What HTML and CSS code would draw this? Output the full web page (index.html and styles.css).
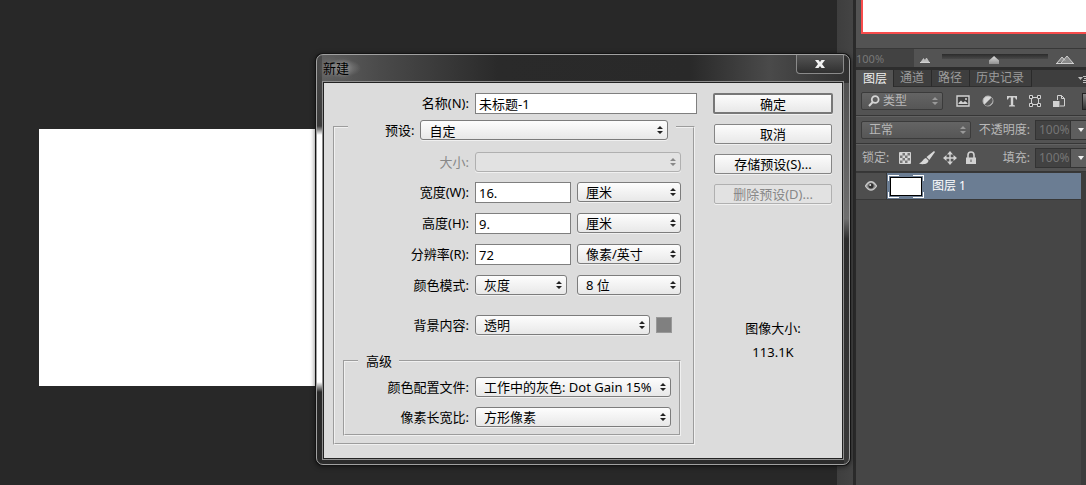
FILE: index.html
```html
<!DOCTYPE html>
<html lang="zh-CN">
<head>
<meta charset="utf-8">
<title>新建</title>
<link rel="stylesheet" href="styles.css">
</head>
<body>
<div class="app">
  <main class="workspace"><div class="canvas"></div></main>
  <div class="dock-strip"></div>
  <aside class="panels">
    <section class="navigator">
      <div class="navigator-view"><div class="navigator-proxy"></div></div>
      <div class="navigator-bar">
        <input class="zoom-value" type="text" value="100%" aria-label="缩放">
        <svg class="mountain-small" viewBox="0 0 10 6" width="10" height="6"><path d="M0 5.500h10" stroke="#d0d0d0"/><path d="M1 5l2.500-3.500L5 3.500 6.500 1 9 5z" fill="#bbb" stroke="#d0d0d0" stroke-width=".6"/></svg>
        <input class="zoom-slider" type="range" min="0" max="100" value="49" aria-label="缩放滑块">
        <svg class="mountain-large" viewBox="0 0 18 9" width="18" height="9"><path d="M1 8L6 2l3 3.500M5 8l6-7 6 7" fill="#8a8a8a" stroke="#d0d0d0"/><path d="M0 8.500h18" stroke="#d0d0d0"/></svg>
      </div>
    </section>
    <section class="layers">
      <nav class="tabs">
        <button class="tab tab-active" type="button">图层</button>
        <button class="tab" type="button">通道</button>
        <button class="tab" type="button">路径</button>
        <button class="tab" type="button">历史记录</button>
        <button class="panel-menu" type="button" aria-label="面板菜单"><svg viewBox="0 0 8 8" width="8" height="8"><path d="M0 2h5L2.500 5z" fill="#c0c0c0"/><path d="M5 1.500h3M6 3.500h2M5 5.500h3M5 7.500h3" stroke="#c0c0c0"/></svg></button>
      </nav>
      <div class="tool-row filter-row">
        <div class="filter-kind">
          <svg class="search-icon" viewBox="0 0 12 12" width="12" height="12"><circle cx="7.200" cy="4.500" r="3.400" fill="none" stroke="#d4d4d4" stroke-width="1.800"/><path d="M4.800 7L1 11" stroke="#d4d4d4" stroke-width="2"/></svg>
          <select class="dark-select" aria-label="过滤类型"><option>类型</option></select>
        </div>
        <div class="filter-icons">
          <button class="icon-button" type="button" aria-label="像素图层"><svg viewBox="0 0 14 12" width="14" height="12"><path d="M1 1h12v10H1z" fill="#404040" stroke="#d2d2d2" stroke-width="1.400"/><path d="M2.500 9V8L5 5.500l2 2L9 6l2.500 2v1z" fill="#d2d2d2"/><circle cx="10" cy="4" r="1" fill="#d2d2d2"/></svg></button>
          <button class="icon-button" type="button" aria-label="调整图层"><svg viewBox="0 0 12 12" width="12" height="12"><circle cx="6" cy="6" r="5" fill="#d8d8d8" stroke="#b4b4b4"/><path d="M2.500 9.500A5 5 0 0 0 9.500 2.500z" fill="#5b5b5b"/></svg></button>
          <button class="icon-button" type="button" aria-label="文字图层"><svg viewBox="0 0 12 12" width="12" height="12"><path d="M1 1h10v3.500h-1L9 2.500H7.200v7.500l1.800.5V11.500H3v-1l1.800-.5V2.500H3L2 4.500H1z" fill="#d2d2d2"/></svg></button>
          <button class="icon-button" type="button" aria-label="形状图层"><svg viewBox="0 0 12 12" width="12" height="12"><path d="M2.500 2.500h7v7h-7z" fill="none" stroke="#d2d2d2"/><path d="M.5.5h3v3h-3zM8.500.5h3v3h-3zM.5 8.500h3v3h-3zM8.500 8.500h3v3h-3z" fill="#404040" stroke="#d2d2d2"/></svg></button>
          <button class="icon-button" type="button" aria-label="智能对象"><svg viewBox="0 0 12 12" width="12" height="12"><path d="M4.500 5V.5h4l3 3v7.500H7" fill="none" stroke="#d2d2d2"/><path d="M8.500.5v3h3" fill="none" stroke="#d2d2d2"/><path d="M0 6h6.500v6H0z" fill="#d2d2d2"/></svg></button>
        </div>
        <button class="filter-toggle" type="button" aria-label="过滤开关"></button>
      </div>
      <div class="tool-row">
        <select class="dark-select blend-select" aria-label="混合模式"><option>正常</option></select>
        <label class="value-label" for="opacity">不透明度:</label>
        <input class="value-input" id="opacity" type="text" value="100%">
        <button class="value-drop" type="button" aria-label="不透明度选项"></button>
      </div>
      <div class="tool-row">
        <span class="lock-label">锁定:</span>
        <div class="lock-icons">
          <button class="icon-button" type="button" aria-label="锁定透明像素"><svg viewBox="0 0 12 12" width="12" height="12"><path d="M.5.5h11v11H.5z" fill="#777" stroke="#d2d2d2"/><path d="M1 1h2.500v2.500H1zM6 1h2.500v2.500H6zM3.500 3.500H6V6H3.500zM8.500 3.500H11V6H8.500zM1 6h2.500v2.500H1zM6 6h2.500v2.500H6zM3.500 8.500H6V11H3.500zM8.500 8.500H11V11H8.500z" fill="#d8d8d8"/></svg></button>
          <button class="icon-button" type="button" aria-label="锁定图像像素"><svg viewBox="0 0 16 14" width="16" height="14"><path d="M15 0L7.500 6l2.800 3L16 1z" fill="#d8d8d8"/><path d="M7 7C4.500 7 4 11 0 12.500c4 1.500 9.500.5 9.500-3z" fill="#d8d8d8"/></svg></button>
          <button class="icon-button" type="button" aria-label="锁定位置"><svg viewBox="0 0 14 14" width="14" height="14"><path d="M7 2v10M2 7h10" stroke="#d2d2d2" stroke-width="1.400"/><path d="M7 0l3 3.500H4zM7 14l3-3.500H4zM0 7l3.500-3v6zM14 7l-3.500-3v6z" fill="#d2d2d2"/></svg></button>
          <button class="icon-button" type="button" aria-label="锁定全部"><svg viewBox="0 0 12 14" width="12" height="14"><path d="M3 7V4a3 3 0 0 1 6 0v3" fill="none" stroke="#d2d2d2" stroke-width="1.600"/><path d="M1 6.500h10V13H1z" fill="#d2d2d2"/><path d="M5.500 8.500h1V11h-1z" fill="#555"/></svg></button>
        </div>
        <label class="value-label" for="fill">填充:</label>
        <input class="value-input" id="fill" type="text" value="100%">
        <button class="value-drop" type="button" aria-label="填充选项"></button>
      </div>
      <div class="layer-area">
        <div class="layer">
          <button class="layer-eye" type="button" aria-label="可见性"><svg viewBox="0 0 12 10" width="12" height="10"><path d="M.5 5Q6-3.500 11.500 5 6 13 .5 5z" fill="#888" stroke="#c8c8c8" stroke-width="1.300"/><circle cx="6" cy="4.800" r="2.600" fill="#303030"/><circle cx="5.200" cy="4" r="1" fill="#ddd"/></svg></button>
          <div class="layer-main">
            <div class="layer-thumb"><div class="layer-image"></div></div>
            <span class="layer-name">图层 1</span>
          </div>
        </div>
      </div>
    </section>
  </aside>

  <form class="dialog" role="dialog" aria-labelledby="dialog-title">
    <header class="titlebar">
      <h1 class="dialog-title" id="dialog-title">新建</h1>
      <button class="close" type="button" aria-label="关闭"><svg viewBox="0 0 10 8" width="10" height="8"><path d="M0 0h3.500L5 2 6.500 0H10L7 4l3 4H6.500L5 6 3.500 8H0l3-4z" fill="#f4f4f4"/></svg></button>
    </header>
    <div class="dialog-body">
      <div class="settings">
        <div class="row name-row"><label class="row-label" for="name">名称(N):</label><input class="text-input" id="name" type="text" value="未标题-1"></div>
        <fieldset class="group">
          <legend class="preset-legend"><label for="preset">预设:</label><select class="select preset-select" id="preset"><option>自定</option></select></legend>
          <div class="rows">
            <div class="row"><label class="row-label disabled-label" for="size">大小:</label><select class="select" id="size" disabled><option></option></select></div>
            <div class="row"><label class="row-label" for="width">宽度(W):</label><input class="text-input" id="width" type="text" value="16."><select class="select unit-select" aria-label="宽度单位"><option>厘米</option></select></div>
            <div class="row"><label class="row-label" for="height">高度(H):</label><input class="text-input" id="height" type="text" value="9."><select class="select unit-select" aria-label="高度单位"><option>厘米</option></select></div>
            <div class="row"><label class="row-label" for="resolution">分辨率(R):</label><input class="text-input" id="resolution" type="text" value="72"><select class="select unit-select" aria-label="分辨率单位"><option>像素/英寸</option></select></div>
            <div class="row mode-row"><label class="row-label" for="mode">颜色模式:</label><select class="select" id="mode"><option>灰度</option></select><select class="select unit-select" aria-label="位深度"><option>8 位</option></select></div>
            <div class="row background-row"><label class="row-label" for="background">背景内容:</label><select class="select" id="background"><option>透明</option></select><button class="swatch" type="button" aria-label="背景颜色"></button></div>
          </div>
          <fieldset class="group advanced">
            <legend class="advanced-legend">高级</legend>
            <div class="row"><label class="row-label" for="profile">颜色配置文件:</label><select class="select" id="profile"><option>工作中的灰色: Dot Gain 15%</option></select></div>
            <div class="row"><label class="row-label" for="ratio">像素长宽比:</label><select class="select" id="ratio"><option>方形像素</option></select></div>
          </fieldset>
        </fieldset>
      </div>
      <div class="actions">
        <button class="button button-default" type="submit">确定</button>
        <button class="button" type="button">取消</button>
        <button class="button" type="button">存储预设(S)...</button>
        <button class="button" type="button" disabled>删除预设(D)...</button>
        <dl class="image-size"><dt>图像大小:</dt><dd>113.1K</dd></dl>
      </div>
    </div>
  </form>
</div>
</body>
</html>
```
FILE: styles.css
```css
*, *::before, *::after { box-sizing: border-box; }

body {
  margin: 0;
  background: #282828;
  color: #000;
  font: 13px/16px "Noto Sans", "Noto Sans CJK SC", sans-serif;
}

button, input, select {
  margin: 0;
  padding: 0;
  border: 0;
  font: inherit;
  color: inherit;
}

.app {
  position: relative;
  display: flex;
  min-height: 100vh;
  overflow: hidden;
}

.workspace {
  flex: 1;
  padding: 129px 0 99px 39px;
  background: #282828;
}

.canvas {
  max-width: 455px;
  height: 257px;
  background: #fff;
}

.dock-strip {
  width: 19px;
  background: linear-gradient(90deg, #3e3e3e, #444 16px, #2a2a2a 16px);
}

/* Docked panels */

.panels {
  display: flex;
  flex-direction: column;
  width: 230px;
  background: #535353;
  color: #b8b8b8;
}

.navigator { border-bottom: 3px solid #2d2d2d; }

.navigator-view {
  height: 49px;
  padding-left: 5px;
  border-bottom: 1px solid #383838;
}

.navigator-proxy {
  height: 34px;
  border: solid #f84c4c;
  border-width: 0 0 2px 2px;
  background: #fff;
}

.navigator-bar {
  display: flex;
  align-items: center;
  height: 18px;
}

.zoom-value {
  width: 58px;
  height: 18px;
  margin-right: 6px;
  background: #424242;
  color: #787878;
  font-size: 11px;
}

.zoom-slider {
  flex: 1;
  min-width: 0;
  height: 14px;
  margin: 0 8px 0 12px;
  appearance: none;
  background: linear-gradient(#2c2c2c, #484848) center 3px / 100% 5px no-repeat;
}

.zoom-slider::-webkit-slider-thumb {
  appearance: none;
  width: 10px;
  height: 8px;
  margin-top: 4px;
  background: linear-gradient(#ddd, #909090);
  clip-path: polygon(50% 0, 100% 55%, 100% 100%, 0 100%, 0 55%);
}

.mountain-small, .mountain-large { flex: none; margin-top: 3px; }
.mountain-large { margin-right: 12px; }

.layers {
  display: flex;
  flex: 1;
  flex-direction: column;
}

.tabs {
  display: flex;
  height: 17px;
  background: #3e3e3e;
}

.tab {
  padding: 0 7px 0 6px;
  border-right: 1px solid #2a2a2a;
  border-bottom: 1px solid #2f2f2f;
  background: #3e3e3e;
  color: #9c9c9c;
  font-size: 12px;
  line-height: 16px;
}

.tab-active {
  padding: 0 6px 0 7px;
  border-bottom: 0;
  background: #535353;
  color: #f0f0f0;
}

.panel-menu {
  display: flex;
  align-items: center;
  margin-left: auto;
  background: none;
}

.tool-row {
  display: flex;
  align-items: center;
  height: 28px;
  padding-left: 5px;
  border-bottom: 1px solid #363636;
  box-shadow: 0 1px #626262;
}

.filter-row { height: 29px; }

.dark-select {
  height: 18px;
  border: 1px solid #3b3b3b;
  border-radius: 2px;
  appearance: none;
  background:
    url("data:image/svg+xml,%3Csvg xmlns='http://www.w3.org/2000/svg' width='6' height='8'%3E%3Cpath d='M0 3l3-3 3 3zM0 5l3 3 3-3z' fill='%23999'/%3E%3C/svg%3E") right 4px center no-repeat,
    linear-gradient(#646464, #565656);
  font-size: 12px;
}

.filter-kind { position: relative; width: 82px; }
.filter-kind .dark-select { width: 100%; padding-left: 21px; }

.search-icon {
  position: absolute;
  top: 3px;
  left: 7px;
}

.filter-icons {
  display: flex;
  flex: 1;
  justify-content: space-between;
  margin: 0 17px 0 13px;
}

.icon-button {
  display: flex;
  align-items: center;
  background: none;
}

.filter-toggle {
  width: 4px;
  height: 17px;
  border: 1px solid #222;
  border-right: 0;
  background: linear-gradient(#888, #333);
}

.blend-select { width: 110px; padding-left: 7px; }

.value-label {
  margin-left: auto;
  font-size: 12px;
}

.value-input {
  width: 36px;
  height: 20px;
  margin-left: 5px;
  padding-left: 3px;
  border: 1px solid #333;
  background: #424242;
  color: #757575;
  font-size: 12px;
}

.value-drop {
  width: 15px;
  height: 20px;
  border: solid #333;
  border-width: 1px 0;
  background:
    url("data:image/svg+xml,%3Csvg xmlns='http://www.w3.org/2000/svg' width='6' height='4'%3E%3Cpath d='M0 0h6L3 4z' fill='%23eee'/%3E%3C/svg%3E") 7px center no-repeat,
    #5e5e5e;
}

.lock-label { padding-left: 1px; font-size: 12px; }

.lock-icons {
  display: flex;
  gap: 8px;
  margin-left: 10px;
}

.layer-area {
  flex: 1;
  padding-right: 5px;
  background: linear-gradient(#3c3c3c, #3c3c3c) right / 5px 100% no-repeat, #464646;
}

.layer {
  display: flex;
  height: 28px;
  border: solid #383838;
  border-width: 1px 0;
  background: #535353;
}

.layer-eye {
  display: grid;
  width: 31px;
  place-items: center;
  border-right: 1px solid #383838;
  background: #4e4e4e;
}

.layer-main {
  display: flex;
  flex: 1;
  align-items: center;
  gap: 8px;
  padding-left: 1px;
  background: #6b7d93;
  color: #fff;
}

.layer-name { font-size: 12px; }

/* Corner brackets: the row colour masks the middle of each white edge */
.layer-thumb {
  width: 36px;
  height: 23px;
  padding: 2px;
  background:
    linear-gradient(#6b7d93, #6b7d93) center / 14px 100% no-repeat,
    linear-gradient(#6b7d93, #6b7d93) center / 100% 11px no-repeat,
    linear-gradient(#6b7d93, #6b7d93) center / 34px 21px no-repeat,
    #fff;
}

.layer-image {
  height: 100%;
  border: 1px solid #000;
  background: #fff;
}

/* New document dialog */

.dialog {
  position: absolute;
  top: 54px;
  left: 316px;
  width: 534px;
  padding: 0 5px 4px;
  border: 1px solid #a0a0a0;
  border-radius: 7px;
  background:
    linear-gradient(#4a4a4a, #3b3b3b 71px, #fff 80px, #fff 327px, #292929 337px) left / 5px 100% no-repeat,
    linear-gradient(90deg, #606060, #4a4a4a 12%, #2a2a2a 34%, #292929 70%, #4a4a4a 85%, #303030) top / 100% 28px no-repeat,
    linear-gradient(#4a4a4a, #707070 40%, #2c2c2c 45%, #3a3a3a) right / 5px 100% no-repeat,
    #2b2b2b;
  box-shadow: 0 0 0 1px #141414, 0 1px 5px 1px #0008;
}

.titlebar {
  display: flex;
  align-items: flex-start;
  justify-content: space-between;
  height: 26px;
}

.dialog-title {
  margin: 4px 0 0;
  padding: 0 12px 0 1px;
  background: radial-gradient(closest-side, #8c8c8c, #8c8c8c00);
  font-size: 13px;
  font-weight: 400;
  line-height: 18px;
  text-shadow: 0 0 6px #999;
}

.close {
  display: grid;
  width: 48px;
  height: 19px;
  place-items: center;
  border: 1px solid #8a8a8a;
  border-top: 0;
  border-radius: 0 0 4px 4px;
  background: linear-gradient(#555, #303030);
}

.dialog-body {
  display: flex;
  gap: 18px;
  padding: 11px 10px 14px;
  border: 1px solid #8e8e8e;
  outline: 1px solid #222;
  outline-offset: -2px;
  background: #dcdcdc;
}

.settings { flex: 1; --label-width: 136px; }

.row {
  display: grid;
  grid-template-columns: var(--label-width) 1fr;
  column-gap: 6px;
  align-items: start;
}

.name-row { margin-right: -2px; }

.row-label {
  line-height: 20px;
  text-align: right;
  white-space: nowrap;
}

.disabled-label { color: #888; }

.text-input {
  width: 100%;
  min-width: 0;
  height: 21px;
  padding: 0 3px;
  border: 1px solid #7f7f7f;
  background: #fff;
}

.select {
  width: 100%;
  min-width: 0;
  height: 20px;
  padding: 0 16px 0 8px;
  border: 1px solid #7c7c7c;
  border-radius: 3px;
  appearance: none;
  background:
    url("data:image/svg+xml,%3Csvg xmlns='http://www.w3.org/2000/svg' width='6' height='8'%3E%3Cpath d='M0 3l3-3 3 3zM0 5l3 3 3-3z' fill='%23222'/%3E%3C/svg%3E") right 4px center no-repeat,
    linear-gradient(#fdfdfd, #e8e8e8);
  box-shadow: 0 1px #f0f0f0;
}

.select:disabled {
  border-color: #b0b0b0;
  background:
    url("data:image/svg+xml,%3Csvg xmlns='http://www.w3.org/2000/svg' width='6' height='8'%3E%3Cpath d='M0 3l3-3 3 3zM0 5l3 3 3-3z' fill='%23888'/%3E%3C/svg%3E") right 4px center no-repeat,
    #e2e2e2;
  opacity: 1;
}

.group {
  min-width: 0;
  margin: 6px 0 0;
  padding: 0 12px 7px 0;
  border: 2px groove #f0f0f0;
  --label-width: 134px;
}

.preset-legend {
  display: flex;
  gap: 6px;
  width: 328px;
  height: 14px;
  margin-left: 13px;
  padding: 0 8px 0 37px;
  line-height: 20px;
  white-space: nowrap;
}

.preset-select { flex: 1; }

.rows {
  display: grid;
  row-gap: 10px;
  padding-top: 18px;
}

.unit-select { width: 104px; }

.rows .row:has(.unit-select) { grid-template-columns: var(--label-width) 1fr 104px; }
.rows .mode-row:has(.unit-select) {
  grid-template-columns: var(--label-width) 92px 104px;
  justify-content: start;
}
.mode-row .unit-select { margin-left: 4px; }

.background-row {
  grid-template-columns: var(--label-width) 1fr 16px;
  margin: 10px 9px 0 0;
}

.swatch {
  height: 16px;
  margin-top: 2px;
  border: 1px solid #999;
  background: #808080;
}

.advanced {
  margin: 18px 0 0 8px;
  padding: 0 8px 7px 0;
  --label-width: 124px;
}

.advanced-legend {
  margin-left: 13px;
  padding: 0 7px 0 8px;
}

.advanced .row { padding-top: 8px; }
.advanced .row + .row { padding-top: 10px; }

.actions {
  display: flex;
  flex-direction: column;
  gap: 10px;
  width: 120px;
}

.button {
  height: 20px;
  margin: 0 1px;
  border: 1px solid #858585;
  border-radius: 2px;
  background: linear-gradient(#fcfcfc, #e8e8e8);
  box-shadow: 0 1px #f0f0f0;
  line-height: 16px;
}

.button-default {
  height: 21px;
  margin: 0;
  border: 2px solid #777;
}

.button:disabled {
  border-color: #b0b0b0;
  background: #e2e2e2;
  color: #888;
}

.image-size {
  margin: 106px 0 0;
  text-align: center;
}

.image-size dd { margin: 8px 0 0; }
```
